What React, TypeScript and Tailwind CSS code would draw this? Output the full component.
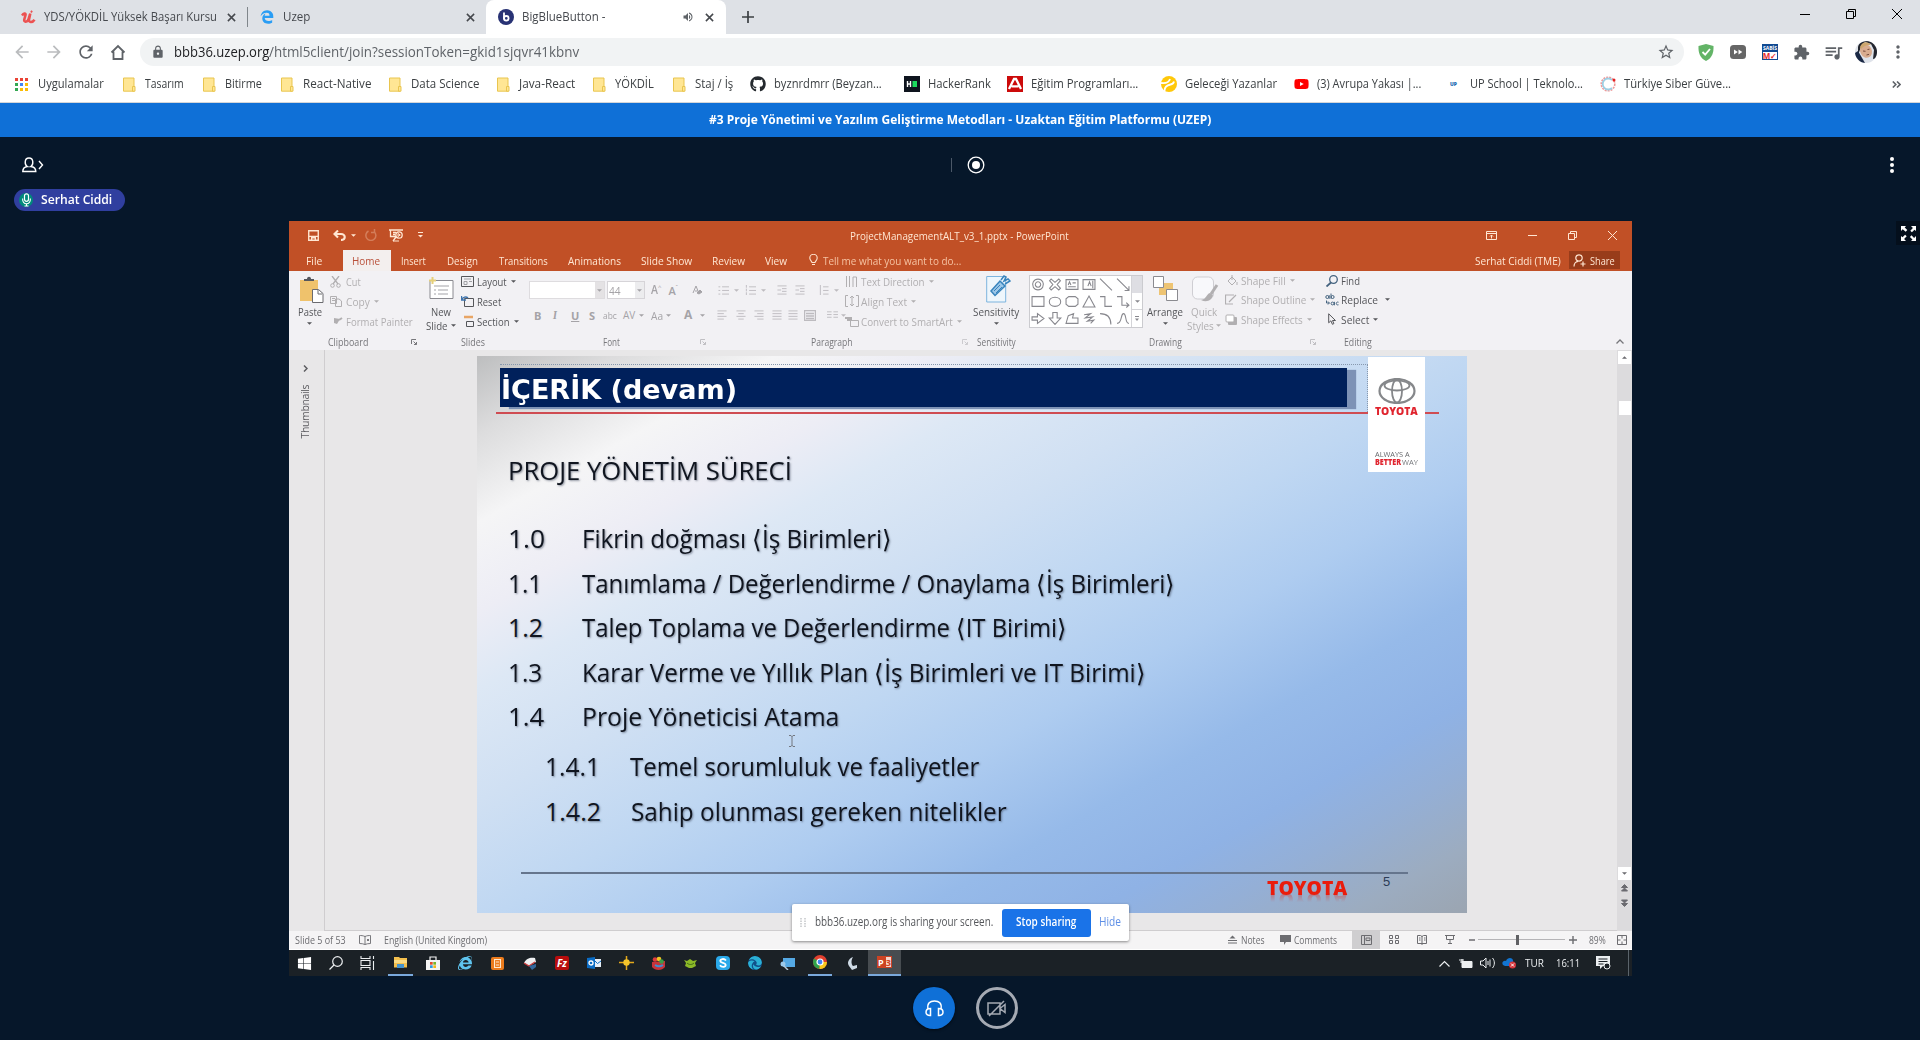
import React, { useLayoutEffect, useRef, useState } from "react";
import { FaGithub, FaYoutube, FaWindows, FaEdge, FaEdgeLegacy, FaInternetExplorer } from "react-icons/fa6";
import { MdLock, MdStarBorder, MdExtension, MdQueueMusic, MdMoreVert, MdRefresh, MdArrowBack, MdArrowForward, MdVolumeUp } from "react-icons/md";

type TProps = { w: number; className?: string; children: string };

/* A single line of text condensed or widened to an exact column width. */
function T({ w, className = "", children }: TProps) {
  const ref = useRef<HTMLSpanElement>(null);
  const [scale, setScale] = useState(1);
  useLayoutEffect(() => {
    if (ref.current) setScale(w / ref.current.offsetWidth);
  }, [w, children]);
  return (
    <span className={`inline-block shrink-0 whitespace-pre ${className}`} style={{ width: w }}>
      <span ref={ref} className="inline-block origin-left" style={{ transform: `scaleX(${scale})` }}>
        {children}
      </span>
    </span>
  );
}

const Svg = ({ s = "", vb = "0 0 16 16", children }: { s?: string; vb?: string; children: React.ReactNode }) => (
  <svg viewBox={vb} className={`shrink-0 ${s}`} fill="none" stroke="currentColor">
    {children}
  </svg>
);

const Close = ({ s = "w-[9px] h-[9px]" }: { s?: string }) => (
  <Svg s={s} vb="0 0 10 10">
    <path d="M1 1l8 8M9 1l-8 8" strokeWidth="1.7" />
  </Svg>
);

const Folder = () => (
  <Svg s="h-[15px] w-[13px]" vb="0 0 13 15">
    <path d="M.5 1h10.500v13.200H.5z" fill="#ffe694" stroke="#e9c54f" />
    <path d="M9.500 9.500h2.500v4.700H9.500z" fill="#ffe694" stroke="#e9c54f" />
  </Svg>
);

const Caret = ({ s = "" }: { s?: string }) => (
  <Svg s={`h-[3px] w-[5px] ${s}`} vb="0 0 6 3">
    <path d="M0 0h6L3 3z" fill="currentColor" stroke="none" />
  </Svg>
);

/* ---------- Browser ---------- */

function TabStrip() {
  return (
    <div className="flex h-[34px] items-center bg-[#dee1e6] text-[12px] leading-none text-[#45484d]">
      <div className="flex w-[247px] items-center pl-[21px]">
        <Svg s="h-[14px] w-[15px]" vb="0 0 15 14">
          <path d="M1 5.500c1.500-2 4-3 3.500-.5L3.300 9.500c-.6 2.700 2.700 3 4 .3L9 4.500M9.300 3.500 8 9.500c-.6 3 3.300 3.500 5.500.2" stroke="#ec5252" strokeWidth="2.600" />
          <path d="M10 2.500 11 .8" stroke="#ec5252" strokeWidth="1.800" />
        </Svg>
        <T w={173} className="ml-[8px]">YDS/YÖKDİL Yüksek Başarı Kursu</T>
        <Close s="ml-[10px] h-[9px] w-[9px]" />
      </div>
      <div className="h-[20px] w-px bg-[#80868b]" />
      <div className="flex w-[238px] items-center pl-[12px]">
        <FaEdgeLegacy className="h-[14px] w-[14px] text-[#2a9df4]" />
        <T w={27} className="ml-[9px]">Uzep</T>
        <Close s="ml-[156px] h-[9px] w-[9px]" />
      </div>
      <div className="flex h-full w-[240px] items-center rounded-t-[8px] bg-white pl-[12px]">
        <Svg s="h-[16px] w-[16px]">
          <circle cx="8" cy="8" r="8" fill="#283274" stroke="none" />
          <path d="M6 3.500v6.800" stroke="#fff" strokeWidth="1.800" />
          <circle cx="8.300" cy="9.300" r="2.300" stroke="#fff" strokeWidth="1.800" />
        </Svg>
        <T w={83} className="ml-[8px]">BigBlueButton -</T>
        <MdVolumeUp className="ml-[77px] h-[12px] w-[12px] text-[#5f6368]" />
        <Close s="ml-[11px] h-[9px] w-[9px]" />
      </div>
      <Svg s="ml-[16px] h-[12px] w-[12px] text-[#3c4043]" vb="0 0 12 12">
        <path d="M6 0v12M0 6h12" strokeWidth="1.700" />
      </Svg>
      <div className="mb-[6px] ml-auto flex items-center pr-[18px] text-black">
        <Svg s="h-[10px] w-[10px]" vb="0 0 10 10"><path d="M0 5.500h10" /></Svg>
        <Svg s="ml-[36px] h-[10px] w-[10px]" vb="0 0 10 10"><path d="M.5 2.500h7v7h-7zM2.500 2.500v-2h7v7h-2" /></Svg>
        <Svg s="ml-[36px] h-[10px] w-[10px]" vb="0 0 10 10"><path d="M0 0l10 10M10 0L0 10" /></Svg>
      </div>
    </div>
  );
}

function Toolbar() {
  return (
    <div className="flex h-[36px] items-center bg-white pl-[12px] text-[#5f6368]">
      <MdArrowBack className="h-[20px] w-[20px] text-[#babcbe]" />
      <MdArrowForward className="ml-[12px] h-[20px] w-[20px] text-[#babcbe]" />
      <MdRefresh className="ml-[12px] h-[20px] w-[20px]" />
      <Svg s="ml-[14px] h-[16px] w-[16px]"><path d="M1.500 8.500 8 2l6.500 6.500M3.500 7.500V15h9V7.500" strokeWidth="1.800" /></Svg>
      <div className="ml-[14px] flex h-[28px] w-[1544px] items-center rounded-full bg-[#f1f3f4] pl-[11px] text-[14px] leading-none">
        <MdLock className="h-[14px] w-[14px]" />
        <T w={95} className="ml-[9px] text-[#202124]">bbb36.uzep.org</T>
        <T w={310}>/html5client/join?sessionToken=gkid1sjqvr41kbnv</T>
        <MdStarBorder className="ml-auto mr-[9px] h-[18px] w-[18px]" />
      </div>
      <Svg s="ml-[14px] h-[17px] w-[16px]" vb="0 0 16 17">
        <path d="M8 0 15.500 2c.3 7-1.500 12-7.500 15C2 14 .2 9 .5 2z" fill="#63b467" stroke="none" />
        <path d="M4.500 8 7.200 10.700 12 5" stroke="#fff" strokeWidth="1.800" />
      </Svg>
      <Svg s="ml-[16px] h-[14px] w-[16px]" vb="0 0 16 14">
        <rect width="16" height="14" rx="3.500" fill="#666" stroke="none" />
        <path d="M4 4.500l3.800 2.500L4 9.500zM8.500 4.500l3.800 2.500-3.800 2.500z" fill="#fff" stroke="none" />
      </Svg>
      <div className="ml-[16px] flex h-[16px] w-[16px] flex-col items-center border border-[#114a92] bg-white leading-none">
        <span className="h-[7px] w-full bg-[#114a92] text-center text-[5px] font-bold leading-[7px] text-white">SABİS</span>
        <span className="text-[8px] font-bold leading-[7px] text-[#e52b2b]">M✓</span>
      </div>
      <MdExtension className="ml-[15px] h-[17px] w-[17px]" />
      <MdQueueMusic className="ml-[13px] h-[21px] w-[21px]" />
      <Svg s="ml-[11px] h-[22px] w-[22px] rounded-full" vb="0 0 22 22">
        <rect width="22" height="22" fill="#dfe3ea" stroke="none" />
        <path d="M3 6c1-5 6-6 11-6l8 3v14l-4 1 1-9-3-6-6-2-4 5-3 8z" fill="#23262f" stroke="none" />
        <path d="M0 12l3-2 7 12H0z" fill="#1b2945" stroke="none" />
        <ellipse cx="11" cy="10" rx="5.800" ry="7" transform="rotate(-25 11 10)" fill="#d9ac8f" stroke="none" />
        <path d="M5 6c2-6 8-6 11-2-4-.5-7 1-10 4z" fill="#cda76f" stroke="none" />
        <path d="M8 10l2.500.3M12.500 8.500l2-.3M11.500 14l2.500-.6" stroke="#744a3b" />
      </Svg>
      <MdMoreVert className="ml-[11px] h-[20px] w-[20px]" />
    </div>
  );
}

function Bookmarks() {
  const folders: [string, number, string][] = [
    ["Tasarım", 39, "w-[80px]"],
    ["Bitirme", 37, "w-[78px]"],
    ["React-Native", 68, "w-[108px]"],
    ["Data Science", 68, "w-[108px]"],
    ["Java-React", 56, "w-[96px]"],
    ["YÖKDİL", 39, "w-[80px]"],
    ["Staj / İş", 38, "w-[77px]"],
  ];
  const dots = ["#ea4335", "#ea4335", "#ea4335", "#34a853", "#4285f4", "#fbbc04", "#34a853", "#fbbc04", "#fbbc04"];
  return (
    <div className="flex h-[33px] items-center border-b border-[#d4d6d9] bg-white pb-[4px] pl-[15px] text-[12px] leading-none text-[#3c4043]">
      <Svg s="h-[13px] w-[13px]" vb="0 0 13 13">
        {dots.map((c, i) => (
          <rect key={i} x={(i % 3) * 5} y={Math.floor(i / 3) * 5} width="3" height="3" fill={c} stroke="none" />
        ))}
      </Svg>
      <T w={66} className="ml-[10px] mr-[19px]">Uygulamalar</T>
      {folders.map(([name, w, cell]) => (
        <div key={name} className={`flex shrink-0 items-center gap-[9px] ${cell}`}>
          <Folder />
          <T w={w}>{name}</T>
        </div>
      ))}
      <div className="flex w-[154px] shrink-0 items-center gap-[8px]">
        <FaGithub className="h-[16px] w-[16px] text-[#24292e]" />
        <T w={108}>byznrdmrr (Beyzan...</T>
      </div>
      <div className="flex w-[103px] shrink-0 items-center gap-[8px]">
        <Svg s="h-[16px] w-[16px]">
          <rect width="16" height="16" fill="#0e141e" stroke="none" />
          <path d="M3.500 5v6M6.500 5v6M3.500 8h3" stroke="#fff" strokeWidth="1.400" />
          <rect x="8.500" y="5" width="4.500" height="6" fill="#1bdb5e" stroke="none" />
        </Svg>
        <T w={63}>HackerRank</T>
      </div>
      <div className="flex w-[154px] shrink-0 items-center gap-[8px]">
        <Svg s="h-[16px] w-[16px]">
          <rect width="16" height="16" fill="#cc0a0a" stroke="none" />
          <path d="M2 13 7 3h2l5 10M4.500 10.300h7" stroke="#fff" strokeWidth="2.300" />
        </Svg>
        <T w={107}>Eğitim Programları...</T>
      </div>
      <div className="flex w-[133px] shrink-0 items-center gap-[8px]">
        <Svg s="h-[16px] w-[16px]">
          <circle cx="8" cy="8" r="8" fill="#ffc80a" stroke="none" />
          <path d="M0 7c4 .5 8-.5 9-4M3.500 15c0-5 3-6 6-6.500 2-.3 3-1 3.500-3" stroke="#fff" strokeWidth="1.800" />
        </Svg>
        <T w={92}>Geleceği Yazanlar</T>
      </div>
      <div className="flex w-[156px] shrink-0 items-center gap-[8px]">
        <FaYoutube className="h-[16px] w-[15px] text-[#f00]" />
        <T w={104}>(3) Avrupa Yakası |...</T>
      </div>
      <div className="flex w-[150px] shrink-0 items-center gap-[12px]">
        <span className="w-[8px] text-[5px] font-black text-[#1767b0]">UP</span>
        <T w={113}>UP School | Teknolo...</T>
      </div>
      <div className="flex shrink-0 items-center gap-[8px]">
        <Svg s="h-[16px] w-[16px]">
          <circle cx="8" cy="8" r="6.800" stroke="#ef9a9a" strokeWidth="1.600" strokeDasharray="2 1" />
          <path d="M12 4a5.500 5.500 0 1 0 0 8" stroke="#9ccfe4" strokeWidth="1.800" />
          <circle cx="14" cy="4" r="1.500" fill="#e52020" stroke="none" />
        </Svg>
        <T w={107}>Türkiye Siber Güve...</T>
      </div>
      <Svg s="ml-auto mr-[19px] h-[7px] w-[9px] text-[#5f6368]" vb="0 0 9 7">
        <path d="M.8.5l3 3-3 3M5 .5l3 3-3 3" strokeWidth="1.600" />
      </Svg>
    </div>
  );
}

/* ---------- PowerPoint window ---------- */

const tabs: [string, number, string][] = [
  ["Insert", 25, "w-[46px]"],
  ["Design", 31, "w-[52px]"],
  ["Transitions", 49, "w-[69px]"],
  ["Animations", 53, "w-[73px]"],
  ["Slide Show", 51, "w-[71px]"],
  ["Review", 33, "w-[53px]"],
  ["View", 22, "w-[44px]"],
];

function PptHeader() {
  return (
    <div className="h-[50px] bg-[#c15026] text-[#ffe6d2]">
      <div className="flex h-[28px] items-center pl-[19px]">
        <Svg s="h-[11px] w-[11px]" vb="0 0 12 12"><path d="M.8.800h10.400v10.400H.8zM1 7h10M4 11V8.500h4V11" strokeWidth="1.500" /></Svg>
        <Svg s="ml-[14px] h-[11px] w-[13px]" vb="0 0 13 11"><path d="M5 .5 1.500 4 5 7.500M1.500 4H8c5 0 5 6 0 6" strokeWidth="2.100" /></Svg>
        <Caret s="ml-[5px]" />
        <Svg s="ml-[9px] h-[12px] w-[12px] opacity-30" vb="0 0 12 12"><path d="M9 2.500A5 5 0 1 1 3.500 2M9.500 0v3.500H6" strokeWidth="1.500" /></Svg>
        <Svg s="ml-[12px] h-[13px] w-[14px]" vb="0 0 14 13"><path d="M0 1h14M1.500 1v6.500H7M4 3.500h3M4 5.500h2M4 12l3-4" strokeWidth="1.300" /><circle cx="10" cy="6" r="3.200" strokeWidth="1.300" /><path d="M9 4.500v3l2.300-1.500zM4 12h6" /></Svg>
        <Svg s="ml-[15px] h-[6px] w-[5px]" vb="0 0 5 6"><path d="M0 .5h5" /><path d="M0 3h5L2.500 5.500z" fill="currentColor" stroke="none" /></Svg>
        <T w={219} className="ml-[427px] mt-px text-[11px] font-medium leading-none">ProjectManagementALT_v3_1.pptx - PowerPoint</T>
        <Svg s="ml-[417px] h-[9px] w-[11px]" vb="0 0 11 9"><path d="M.5.500h10v8H.5zM.5 2.500h10M5.500 7.500V4M4 5.500 5.500 4 7 5.500" /></Svg>
        <Svg s="ml-[31px] h-[9px] w-[9px]" vb="0 0 9 9"><path d="M0 4.500h9" /></Svg>
        <Svg s="ml-[31px] h-[9px] w-[9px]" vb="0 0 9 9"><path d="M.5 2.500h6v6h-6zM2.500 2.500v-2h6v6h-2" /></Svg>
        <Svg s="ml-[31px] h-[9px] w-[9px]" vb="0 0 9 9"><path d="M0 0l9 9M9 0L0 9" /></Svg>
      </div>
      <div className="flex h-[22px] items-center text-[11px] font-medium leading-none">
        <T w={16} className="ml-[17px]">File</T>
        <div className="ml-[21px] mr-[10px] mt-px flex h-[21px] w-[48px] items-center bg-[#f3efee] pb-px pl-[9px] text-[#b9503a]">
          <T w={28}>Home</T>
        </div>
        {tabs.map(([name, w, cell]) => (
          <span key={name} className={`flex shrink-0 ${cell}`}><T w={w}>{name}</T></span>
        ))}
        <Svg s="h-[12px] w-[9px]" vb="0 0 9 12"><path d="M3 8.500C2.500 7 .8 6 .8 4a3.700 3.700 0 0 1 7.400 0c0 2-1.700 3-2.200 4.500zM3 10.500h3" strokeWidth="1.100" /></Svg>
        <T w={138} className="ml-[5px] text-[#f6c3a3]">Tell me what you want to do...</T>
        <T w={86} className="ml-[514px]">Serhat Ciddi (TME)</T>
        <div className="ml-[8px] flex h-[18px] w-[51px] items-center bg-[#983c1a] pl-[4px]">
          <Svg s="h-[13px] w-[13px]" vb="0 0 13 13"><circle cx="6" cy="4" r="3.200" strokeWidth="1.200" /><path d="M1 12.500c0-3 2-5 4-5.200M10 7.500v5M7.500 10h5" strokeWidth="1.200" /></Svg>
          <T w={25} className="ml-[4px]">Share</T>
        </div>
      </div>
    </div>
  );
}

const Lines = ({ d = "M0 1h10M0 4h10M0 7h10M0 10h10", s = "" }: { d?: string; s?: string }) => (
  <Svg s={`h-[10px] w-[10px] ${s}`} vb="0 0 10 11"><path d={d} /></Svg>
);

function RibbonRow({ icon, label, w, caret, faded }: { icon: React.ReactNode; label: string; w: number; caret?: boolean; faded?: boolean }) {
  return (
    <div className={`flex items-center ${faded ? "text-[#b1afb1]" : "text-[#55565a]"}`}>
      <span className="flex w-[16px] shrink-0 items-center">{icon}</span>
      <T w={w}>{label}</T>
      {caret && <Caret s="ml-[4px]" />}
    </div>
  );
}

const Launcher = ({ s = "" }: { s?: string }) => (
  <Svg s={`h-[6px] w-[6px] ${s}`} vb="0 0 6 6"><path d="M.5 5V.5H5M2.500 2.500l3 3M5.500 3v2.500H3" /></Svg>
);

const groupLabel = "flex h-[13px] items-center text-[10px] leading-none text-[#77777b]";

function Shapes() {
  const d = [
    "M5.500 .5a5 5 0 1 0 .01 0M5.500 3a2.500 2.500 0 1 0 .01 0", "M2 .5l3.500 3 3.500-3 1.500 1.500-3 3.500 3 3.500-1.500 1.500-3.500-3-3.500 3L.5 9l3-3.500L.5 2z", "M0 1h11v9H0zM2 7.500h7M6 4h3M2 6l1.200-3L4.500 6", "M0 1h11v9H0zM9 9V2M4.500 7 6 3l1.500 4", "M0 0l11 11", "M0 0l11 11M11 7v4H7",
    "M0 1h11v9H0z", "M5.500 1.500c7 0 7 8.500 0 8.500s-7-8.500 0-8.500", "M2.500 1h6l2.500 2v5L8.500 10h-6L0 8V3z", "M5.500.5 11 10.500H0z", "M0 1h4.500v9H11", "M0 1h4.500v8H11M8.500 6.500 11 9l-2.500 2",
    "M0 4h5V1l6 4.500L5 10V7H0z", "M3.500 0h4v5H11l-5.500 6L0 5h3.500z", "M2 3l5-2-1 4h5v5H0z", "M1 2l6-1-5 4 7-1-5 4 6-1-3 3", "M0 1c7 0 10 3 10 10", "M0 10C5 10 3 1 6 1s1 9 5 9",
  ];
  return (
    <div className="ml-[4px] mt-[4px] flex h-[53px] w-[114px] border border-[#cbcbcf] bg-white text-[#88888e]">
      <div className="grid flex-1 grid-cols-6 grid-rows-3 place-items-center">
        {d.map((p, i) => (
          <Svg key={i} s="h-[13px] w-[14px]" vb="-.5 -.5 12 12"><path d={p} /></Svg>
        ))}
      </div>
      <div className="flex w-[11px] flex-col items-center border-l border-[#d4d4d8]">
        <span className="h-[17px] w-full bg-[#dedee3]" />
        <span className="flex h-[17px] w-full items-center justify-center border-b border-[#d4d4d8]"><Caret s="w-[4px]" /></span>
        <span className="flex h-[17px] items-center"><Svg s="h-[5px] w-[4px]" vb="0 0 4 5"><path d="M0 .5h4" /><path d="M0 2.500h4L2 5z" fill="currentColor" stroke="none" /></Svg></span>
      </div>
    </div>
  );
}

function Ribbon() {
  return (
    <div className="flex h-[79px] shrink-0 bg-[#f2f1f4] text-[11px] font-medium leading-none text-[#55565a]">
      {/* Clipboard */}
      <div className="w-[137px]">
        <div className="flex h-[64px]">
          <div className="flex w-[41px] flex-col items-center pt-[5px]">
            <Svg s="ml-[4px] h-[27px] w-[25px]" vb="0 0 25 27">
              <path d="M1 4h18v21H1z" fill="#efc26c" stroke="none" />
              <path d="M5 5V3h3c0-3 4-3 4 0h3v2z" fill="#55575e" stroke="none" />
              <path d="M13.500 13.500h6l4.500 4v9H13.500z" fill="#fff" stroke="#6b6b6f" /><path d="M19 14v4h4" stroke="#6b6b6f" />
            </Svg>
            <T w={24} className="mt-[3px]">Paste</T>
            <Caret s="mt-[5px] w-[4px]" />
          </div>
          <div className="mt-[1px] grid h-[59px] grid-rows-3">
            <RibbonRow faded label="Cut" w={15} icon={<Svg s="h-[12px] w-[11px]" vb="0 0 11 12"><path d="M2 0l6 8M9 0L3 8" strokeWidth="1.300" /><circle cx="2.500" cy="9.500" r="1.800" /><circle cx="8.500" cy="9.500" r="1.800" /></Svg>} />
            <RibbonRow faded label="Copy" w={24} caret icon={<Svg s="h-[11px] w-[12px]" vb="0 0 12 11"><path d="M.5.500h6v7h-6zM5.500 3h3.500l2.500 2v5.500h-6zM2 2.500h3M2 4.500h3" /></Svg>} />
            <RibbonRow faded label="Format Painter" w={67} icon={<Svg s="ml-[3px] h-[9px] w-[10px]" vb="0 0 10 9"><path d="M1 1l6 1-3 5-3-1z" fill="currentColor" stroke="none" /><path d="M6 3l3-2" strokeWidth="2" /></Svg>} />
          </div>
        </div>
        <div className={groupLabel}><T w={40} className="ml-[39px]">Clipboard</T><Launcher s="ml-[43px]" /></div>
      </div>
      {/* Slides */}
      <div className="w-[100px]">
        <div className="flex h-[64px]">
          <div className="flex w-[35px] flex-col pt-[6px]">
            <Svg s="ml-[3px] h-[22px] w-[25px]" vb="0 0 25 22">
              <path d="M1 3.500h23v18H1z" fill="#fff" stroke="#8a8a90" /><path d="M5 9h15M5 13h2M9 13h10M5 17h2M9 17h10" stroke="#a3a3a8" />
              <path d="M3.500 0v7M0 3.500h7" stroke="#e5cf7a" strokeWidth="2" />
            </Svg>
            <T w={20} className="ml-[5px] mt-[7px]">New</T>
            <span className="mt-[3px] flex items-center"><T w={22}>Slide</T><Caret s="ml-[3px] w-[4px]" /></span>
          </div>
          <div className="mt-[1px] grid h-[59px] grid-rows-3">
            <RibbonRow label="Layout" w={30} caret icon={<Svg s="h-[11px] w-[13px]" vb="0 0 13 11"><path d="M.5.500h12v10H.5z" /><path d="M3 3h7M3 5.500h3v3H3zM8 5.500h3" stroke="#a0a0a4" /></Svg>} />
            <RibbonRow label="Reset" w={24} icon={<Svg s="h-[11px] w-[13px]" vb="0 0 13 11"><path d="M3.500 2.500h9v8h-9z" /><path d="M.5 0v4H5M.8 3.500C2 1 5 0 7 2" stroke="#3f74ad" strokeWidth="1.400" /></Svg>} />
            <RibbonRow label="Section" w={33} caret icon={<Svg s="ml-[3px] h-[12px] w-[10px]" vb="0 0 10 12"><path d="M2.500 6.500h7v5h-7z" /><path d="M0 2h9" stroke="#e8a565" strokeWidth="2.500" /></Svg>} />
          </div>
        </div>
        <div className={groupLabel}><T w={24} className="ml-[35px]">Slides</T></div>
      </div>
      {/* Font */}
      <div className="w-[191px] text-[#a5a3a7]">
        <div className="h-[64px] pt-[10px]">
          <div className="flex h-[18px] items-center pl-[3px]">
            <div className="flex h-full w-[76px] justify-end border border-[#dedcdf] bg-white"><span className="flex w-[9px] items-center justify-center bg-[#e4e2e4]"><Caret s="w-[4px]" /></span></div>
            <div className="ml-[2px] flex h-full w-[38px] items-center justify-between border border-[#d6d4d8] bg-white"><T w={12} className="ml-px">44</T><span className="flex h-full w-[9px] items-center justify-center bg-[#ececee]"><Caret s="w-[4px]" /></span></div>
            <T w={7} className="ml-[6px] text-[12px] font-semibold">A</T><span className="-mt-[7px] text-[6px]">^</span>
            <T w={7} className="ml-[7px] text-[11px] font-semibold">A</T><span className="-mt-[7px] text-[6px]">ˇ</span>
            <Svg s="ml-[14px] h-[10px] w-[10px]" vb="0 0 10 10"><path d="M1 8l3-7 2 5M3 6h3" /><path d="M5 8l3-3 2 2-3 2z" fill="currentColor" /></Svg>
          </div>
          <div className="mt-[7px] flex h-[18px] items-center pl-[8px]">
            <span className="w-[19px] font-bold">B</span>
            <span className="w-[18px] font-serif font-bold italic">I</span>
            <span className="w-[18px] font-bold underline">U</span>
            <span className="w-[14px] font-bold">S</span>
            <T w={14} className="text-[9px] line-through">abc</T>
            <T w={12} className="ml-[6px] text-[10px] underline">AV</T><Caret s="ml-[4px] w-[4px]" />
            <T w={12} className="ml-[7px]">Aa</T><Caret s="ml-[3px] w-[4px]" />
            <span className="ml-[13px] text-[12px] font-bold">A</span><Caret s="ml-[8px] w-[4px]" />
          </div>
        </div>
        <div className={groupLabel}><T w={17} className="ml-[77px]">Font</T><Launcher s="ml-[80px] opacity-40" /></div>
      </div>
      {/* Paragraph */}
      <div className="w-[252px] text-[#bdbbbf]">
        <div className="flex h-[64px]">
          <div className="w-[128px] shrink-0 pt-[10px]">
            <div className="flex h-[18px] items-center">
              <Lines s="w-[12px]" d="M0 2h2M4 2h8M0 6h2M4 6h8M0 10h2M4 10h8" /><Caret s="ml-[5px] w-[4px]" />
              <Lines s="ml-[5px] w-[12px]" d="M1 0v3M4 2h8M1 4v3M4 6h8M1 8v3M4 10h8" /><Caret s="ml-[5px] w-[4px]" />
              <Lines s="ml-[10px] w-[12px]" d="M0 1h10M5 4h5M5 7h5M0 10h10M0 5.500h4" />
              <Lines s="ml-[6px] w-[12px]" d="M0 1h10M5 4h5M5 7h5M0 10h10M0 5.500h4" />
              <Lines s="ml-[12px] w-[12px]" d="M1 0v11M4 2h6M4 6h6M4 10h6" /><Caret s="ml-[4px] w-[4px]" />
            </div>
            <div className="mt-[7px] flex h-[18px] items-center">
              <Lines d="M0 1h10M0 4h7M0 7h10M0 10h7" />
              <Lines s="ml-[9px]" d="M0 1h10M2 4h6M0 7h10M2 10h6" />
              <Lines s="ml-[8px]" d="M0 1h10M3 4h7M0 7h10M3 10h7" />
              <Lines s="ml-[8px]" />
              <Lines s="ml-[6px]" />
              <Svg s="ml-[6px] h-[11px] w-[12px]" vb="0 0 12 11"><path d="M.5.500h11v10H.5zM2 3.500h8M2 6h8M2 8.500h8" strokeWidth="1.400" /></Svg>
              <Lines s="ml-[10px] w-[13px]" d="M-1 2h5M6 2h5M-1 5h5M6 5h5M-1 8h5M6 8h5" />
              <Caret s="ml-[2px] w-[4px]" />
            </div>
          </div>
          <div className="mt-[1px] grid h-[59px] grid-rows-3">
            <RibbonRow faded label="Text Direction" w={64} caret icon={<Svg s="h-[12px] w-[13px]" vb="0 0 13 12"><path d="M1.500 0v11M4.500 0v11M8 11V1h3.500v10" /></Svg>} />
            <RibbonRow faded label="Align Text" w={46} caret icon={<Svg s="h-[12px] w-[14px]" vb="0 0 14 12"><path d="M3 .5H.5v11H3M11 .5h2.500v11H11M7 1v10M5 3l2-2 2 2M5 9l2 2 2-2" /></Svg>} />
            <RibbonRow faded label="Convert to SmartArt" w={92} caret icon={<Svg s="h-[11px] w-[14px]" vb="0 0 14 11"><path d="M0 2h7M2 4h5" strokeWidth="2" /><path d="M5.500 4.500h8v6h-8z" /></Svg>} />
          </div>
        </div>
        <div className={groupLabel}><T w={42} className="ml-[94px]">Paragraph</T><Launcher s="ml-[109px] opacity-30" /></div>
      </div>
      {/* Sensitivity */}
      <div className="w-[56px]">
        <div className="flex h-[64px] flex-col pt-[4px]">
          <Svg s="ml-[17px] h-[28px] w-[25px]" vb="0 0 25 28">
            <path d="M.7 1.500h19v25.500H.7z" fill="#eef6fc" stroke="#7db4de" />
            <path d="M5 16 14 6l5 5-10 9.500z" fill="#9cc7e8" stroke="#3884bd" strokeWidth="1.500" /><path d="M8 16l6-6M10 18l6-6" stroke="#3884bd" />
            <path d="M15 5l3-4 2 1-2 4 4-2 2 2-5 3" stroke="#3884bd" strokeWidth="1.500" />
          </Svg>
          <T w={46} className="ml-[4px] mt-[3px]">Sensitivity</T>
          <Caret s="ml-[25px] mt-[5px] w-[4px]" />
        </div>
        <div className={groupLabel}><T w={39} className="ml-[8px]">Sensitivity</T></div>
      </div>
      {/* Drawing */}
      <div className="w-[295px]">
        <div className="flex h-[64px]">
          <Shapes />
          <div className="ml-[4px] flex w-[40px] flex-col pt-[5px]">
            <Svg s="ml-[6px] h-[25px] w-[25px]" vb="0 0 25 25">
              <path d="M6 7h14v12H6z" fill="#eec473" stroke="none" />
              <path d="M.5.500h10v11H.5zM13.500 13.500h11v11h-11z" fill="#fff" stroke="#8b8b90" />
            </Svg>
            <T w={36} className="mt-[5px]">Arrange</T>
            <Caret s="ml-[16px] mt-[5px] w-[4px]" />
          </div>
          <div className="flex w-[39px] flex-col pt-[5px] text-[#b1afb1]">
            <Svg s="ml-[5px] h-[27px] w-[27px]" vb="0 0 27 27">
              <rect x=".5" y="1" width="21" height="22" rx="5" fill="#f8f8fb" stroke="#cfced3" />
              <path d="M25 9l-6 9" strokeWidth="3" /><path d="M18 17c-4 1-3 6-9 7 6 3 11 0 12-5z" fill="currentColor" stroke="none" />
            </Svg>
            <T w={26} className="ml-[4px] mt-[3px]">Quick</T>
            <span className="mt-[3px] flex items-center"><T w={27}>Styles</T><Caret s="ml-[2px] w-[4px]" /></span>
          </div>
          <div className="-ml-px grid h-[58px] grid-rows-3">
            <RibbonRow faded label="Shape Fill" w={45} caret icon={<Svg s="ml-[2px] h-[11px] w-[11px]" vb="0 0 11 11"><path d="M1 6l4-4 4 4-4 4zM5 0v5M10 7v3" /></Svg>} />
            <RibbonRow faded label="Shape Outline" w={65} caret icon={<Svg s="h-[11px] w-[12px]" vb="0 0 12 11"><path d="M9 1H.5v9H8M4 8l7-7" strokeWidth="1.200" /></Svg>} />
            <RibbonRow faded label="Shape Effects" w={62} caret icon={<Svg s="h-[11px] w-[12px]" vb="0 0 12 11"><rect x="3" y="3" width="9" height="8" rx="1" fill="currentColor" stroke="none" /><rect x="1" y="1" width="8" height="7" rx="1" fill="#fff" /></Svg>} />
          </div>
        </div>
        <div className={groupLabel}><T w={33} className="ml-[124px]">Drawing</T><Launcher s="ml-[128px] opacity-40" /></div>
      </div>
      {/* Editing */}
      <div className="w-[312px]">
        <div className="flex h-[64px] pl-[5px]">
          <div className="grid h-[58px] grid-rows-3">
            <RibbonRow label="Find" w={19} icon={<Svg s="ml-px h-[12px] w-[12px]" vb="0 0 12 12"><circle cx="7.500" cy="4.500" r="3.800" stroke="#44637f" strokeWidth="1.300" /><path d="M5 7.500.5 11.500" stroke="#44637f" strokeWidth="1.800" /></Svg>} />
            <div className="flex items-center">
              <Svg s="mr-[2px] h-[13px] w-[14px] text-[#44637f]" vb="0 0 14 13">
                <circle cx="2.300" cy="4" r="1.500" /><path d="M4.200 2.200v3.600M6 .5v5.300" /><circle cx="7.600" cy="4" r="1.500" />
                <path d="M1.500 7.500v2.500h2.500M3 8.500 4.500 10 3 11.500" /><circle cx="7.500" cy="10.500" r="1.400" /><path d="M9.400 8.800v3.500M13.500 9.200c-3-1-3 3.500 0 2.600" />
              </Svg>
              <T w={37}>Replace</T><Caret s="ml-[7px] w-[4px]" />
            </div>
            <RibbonRow label="Select" w={28} caret icon={<Svg s="ml-[3px] h-[12px] w-[8px]" vb="0 0 8 12"><path d="M.7.800v9l2.200-2 1.500 3.500 1.500-.7L4.500 7.500h3z" /></Svg>} />
          </div>
        </div>
        <div className={groupLabel}>
          <T w={28} className="ml-[24px]">Editing</T>
          <Svg s="ml-[244px] h-[5px] w-[8px]" vb="0 0 8 5"><path d="M.5 4.500 4 1l3.500 3.500" strokeWidth="1.300" /></Svg>
        </div>
      </div>
    </div>
  );
}

const ToyotaEmblem = () => (
  <Svg s="h-[26px] w-[38px] text-[#85878a]" vb="0 0 38 26">
    <ellipse cx="19" cy="13" rx="17.500" ry="12" strokeWidth="2.200" />
    <ellipse cx="19" cy="7.500" rx="12.500" ry="5" strokeWidth="1.800" />
    <ellipse cx="19" cy="13" rx="5" ry="11.500" strokeWidth="1.800" />
  </Svg>
);

/* number, number width, text, text width */
const outline: [string, number, string, number][] = [
  ["1.0", 37, "Fikrin doğması ⟨İş Birimleri⟩", 310],
  ["1.1", 34, "Tanımlama / Değerlendirme / Onaylama ⟨İş Birimleri⟩", 593],
  ["1.2", 35, "Talep Toplama ve Değerlendirme ⟨IT Birimi⟩", 485],
  ["1.3", 34, "Karar Verme ve Yıllık Plan ⟨İş Birimleri ve IT Birimi⟩", 563],
  ["1.4", 36, "Proje Yöneticisi Atama", 257],
];

function Slide() {
  return (
    <div className="relative h-[557px] w-[990px] bg-[linear-gradient(to_bottom_right,#bdbebf_0%,#dcdcdd_7%,#f5f5f6_15%,#ededf5_23%,#dde8f5_30%,#d0e0f3_40%,#bfd7f2_51%,#aeccf0_61%,#96bae9_72%,#8fb2e5_81%,#94afd6_87%,#9cacc0_94%,#9ba5b1_100%)]">
      <div className="flex h-[56px] pt-[8px] pl-[23px]">
        <div className="h-[48px] w-[868px] border-r border-t border-dotted border-[#8798ae] pt-[3px]">
          <div className="flex h-[39px] w-[847px] items-center bg-[#00205b] shadow-[9px_2px_1px_0px_#7d92b6]">
            <T w={236} className="ml-px mt-[4px] font-['DejaVu_Sans'] text-[26px] font-bold leading-none text-white">İÇERİK (devam)</T>
          </div>
        </div>
      </div>
      <div className="ml-[19px] h-[2px] w-[943px] bg-[#cf4c52]" />
      <div className="absolute left-[891px] top-[1px] flex h-[115px] w-[57px] flex-col items-center bg-white pt-[21px] leading-none">
        <ToyotaEmblem />
        <T w={43} className="mt-px text-[11px] font-extrabold text-[#e0242e]">TOYOTA</T>
        <T w={35} className="-ml-[8px] mt-[34px] text-[8px] text-[#66686c]">ALWAYS A</T>
        <span className="flex text-[8px]">
          <T w={26} className="font-extrabold text-[#e0242e]">BETTER</T>
          <T w={16} className="ml-px text-[#77797d]">WAY</T>
        </span>
      </div>
      <div className="flex flex-col pl-[31px] text-[25px] font-medium leading-[44.4px] text-[#10151f] [text-shadow:1px_1px_2px_rgba(60,70,90,0.55)]">
        <T w={284} className="mt-[34px]">PROJE YÖNETİM SÜRECİ</T>
        <div className="mt-[24px]">
          {outline.map(([n, nw, text, w]) => (
            <div key={n} className="flex h-[44.4px]">
              <span className="w-[74px]"><T w={nw}>{n}</T></span>
              <T w={w}>{text}</T>
            </div>
          ))}
        </div>
        <div className="mt-[6px] flex h-[44.4px] pl-[37px]"><span className="w-[85px]"><T w={55}>1.4.1</T></span><T w={349}>Temel sorumluluk ve faaliyetler</T></div>
        <div className="flex h-[44.4px] pl-[37px]"><span className="w-[86px]"><T w={56}>1.4.2</T></span><T w={376}>Sahip olunması gereken nitelikler</T></div>
      </div>
      <div className="ml-[44px] mt-[39px] h-[2px] w-[887px] bg-[#65758d]" />
      <div className="flex items-start pl-[790px] leading-none">
        <T w={80} className="mt-[4px] text-[20px] font-extrabold text-[#ea1c0c] [-webkit-box-reflect:below_-8px_linear-gradient(transparent_40%,rgba(0,0,0,0.55))]">TOYOTA</T>
        <span className="ml-[36px] mt-px font-['Liberation_Sans'] text-[13px] text-[#2c3b55]">5</span>
      </div>
      <Svg s="absolute left-[311px] top-[379px] h-[12px] w-[8px] text-[#73777f]" vb="0 0 8 12"><path d="M1 .5h2l1 1 1-1h2M1 11.500h2l1-1 1 1h2M4 1v10" /></Svg>
    </div>
  );
}

function Workspace() {
  return (
    <div className="flex h-[581px] bg-[#e8e7e8]">
      <div className="flex w-[36px] flex-col items-center border-r border-[#cfcdcf] pt-[15px] text-[#5d5d61]">
        <Svg s="-ml-[3px] h-[7px] w-[5px]" vb="0 0 5 7"><path d="M1 .5 4 3.500 1 6.500" strokeWidth="1.500" /></Svg>
        <span className="-ml-[3px] mt-[13px] rotate-180 text-[10.5px] font-medium leading-none tracking-[-0.4px] [writing-mode:vertical-rl]">Thumbnails</span>
      </div>
      <div className="flex-1 border-b border-[#cfcdcf] pl-[152px] pt-[6px]"><Slide /></div>
      <div className="flex w-[15px] flex-col items-center bg-[#dcdbdd] pt-[1px] text-[#6b6b70]">
        <span className="flex h-[13px] w-[13px] items-center justify-center bg-white"><Caret s="rotate-180" /></span>
        <span className="mt-[37px] h-[14px] w-[12px] bg-white" />
        <span className="mt-[452px] flex h-[13px] w-[13px] items-center justify-center bg-white"><Caret /></span>
        <Svg s="mt-[4px] h-[8px] w-[7px]" vb="0 0 7 8"><path d="M.5 3.500l3-3 3 3zM.5 7l3-3 3 3z" fill="currentColor" /></Svg>
        <Svg s="mt-[7px] h-[8px] w-[7px]" vb="0 0 7 8"><path d="M.5 1l3 3 3-3zM.5 4.500l3 3 3-3z" fill="currentColor" /></Svg>
      </div>
    </div>
  );
}

function StatusBar() {
  return (
    <div className="flex h-[18px] items-center bg-[#f5f4f5] pb-px text-[10px] font-medium leading-none text-[#6c6c70]">
      <T w={51} className="ml-[6px]">Slide 5 of 53</T>
      <Svg s="ml-[13px] h-[10px] w-[12px]" vb="0 0 12 10"><path d="M6 1v8.500M6 1.500C4 .5 2 .5.500.500v8c2 0 4 .3 5.500 1M6 1.500C8 .5 10 .5 11.500.500v8c-2 0-4 .3-5.500 1M8 4l2 2M10 4l-2 2" strokeWidth=".9" /></Svg>
      <T w={103} className="ml-[13px]">English (United Kingdom)</T>
      <Svg s="ml-[741px] h-[9px] w-[9px]" vb="0 0 9 9"><path d="M0 5.500h9M0 8h9" /><path d="M1.500 3.500h6L4.500.5z" fill="currentColor" stroke="none" /></Svg>
      <T w={24} className="ml-[4px]">Notes</T>
      <Svg s="ml-[15px] h-[10px] w-[11px]" vb="0 0 11 10"><path d="M0 0h11v7H6l-2 3V7H0z" fill="currentColor" stroke="none" /></Svg>
      <T w={43} className="ml-[3px]">Comments</T>
      <div className="-mb-px ml-[15px] flex h-[18px] w-[28px] items-center justify-center bg-[#cfced0]"><Svg s="h-[10px] w-[11px]" vb="0 0 11 10"><path d="M.5.500h10v9H.5zM3.500.500v9M5 3h4v2.500H5z" /></Svg></div>
      <Svg s="ml-[9px] h-[9px] w-[10px]" vb="0 0 10 9"><path d="M.5.500h3v3h-3zM6.500.500h3v3h-3zM.5 5.500h3v3h-3zM6.500 5.500h3v3h-3z" /></Svg>
      <Svg s="ml-[18px] h-[10px] w-[10px]" vb="0 0 10 10"><path d="M5 1v9M.5.500h3L5 1.500 6.500.500h3v8h-9zM2 3h1.500M2 5h1.500M7 3h1.500M7 5h1.500" /></Svg>
      <Svg s="ml-[18px] h-[9px] w-[10px]" vb="0 0 10 9"><path d="M0 .5h10M1.500.500v4h7v-4M5 5v3.500M3 8.500h4" /></Svg>
      <Svg s="ml-[14px] h-[6px] w-[6px]" vb="0 0 6 6"><path d="M0 3h6" strokeWidth="1.500" /></Svg>
      <div className="ml-[3px] flex h-[10px] w-[87px] items-center"><span className="h-px w-[38px] bg-[#b5b4b7]" /><span className="h-[10px] w-[3px] bg-[#606064]" /><span className="h-px w-[46px] bg-[#b5b4b7]" /></div>
      <Svg s="ml-[4px] h-[8px] w-[8px]" vb="0 0 8 8"><path d="M0 4h8M4 0v8" strokeWidth="1.400" /></Svg>
      <T w={17} className="ml-[12px]">89%</T>
      <Svg s="ml-[11px] h-[10px] w-[10px]" vb="0 0 10 10"><path d="M.5.500h9v9h-9zM5 1v2.500M5 6.500V9M1 5h2.500M6.500 5H9" /></Svg>
    </div>
  );
}

function Taskbar() {
  const cell = "flex h-full w-[32.250px] shrink-0 items-center justify-center";
  return (
    <div className="flex h-[26px] items-center bg-[#1b2126] text-[11px] leading-none text-[#eceff1]">
      <div className="flex w-[31px] justify-center"><FaWindows className="h-[15px] w-[15px] text-white" /></div>
      <div className={cell}><Svg s="h-[14px] w-[14px]" vb="0 0 14 14"><circle cx="8.500" cy="5.500" r="4.800" strokeWidth="1.200" /><path d="M5 9 .5 13.500" strokeWidth="1.300" /></Svg></div>
      <div className={cell}><Svg s="h-[14px] w-[16px]" vb="0 0 16 14"><path d="M1 0v2.500h9V0M1 4.500h9v5H1zM1 14v-2.500h9V14M13.500 0v3M13.500 5v9" strokeWidth="1.100" /></Svg></div>
      <div className={cell}>
        <span className="flex h-full w-[25px] items-center justify-center border-b-2 border-[#7aa9dc]">
          <Svg s="h-[12px] w-[13px]" vb="0 0 13 12"><path d="M0 1h5l1 1h7v9.500H0z" fill="#f4c04e" stroke="none" /><path d="M0 4h13v3H0z" fill="#fadb86" stroke="none" /><path d="M3 12V8h7v4z" fill="#4694cf" stroke="none" /></Svg>
        </span>
      </div>
      <div className={cell}><Svg s="h-[14px] w-[14px]" vb="0 0 14 14"><path d="M0 4h14v10H0z" fill="#f4f4f4" stroke="none" /><path d="M4 4V1h6v3" stroke="#f4f4f4" strokeWidth="1.200" /><path d="M4 6h2.700v2.700H4z" fill="#e4492c" stroke="none" /><path d="M7.300 6H10v2.700H7.300z" fill="#77b52b" stroke="none" /><path d="M4 9.300h2.700V12H4z" fill="#2f9ae0" stroke="none" /><path d="M7.300 9.300H10V12H7.300z" fill="#f4b71c" stroke="none" /></Svg></div>
      <div className={cell}><FaInternetExplorer className="h-[14px] w-[14px] text-[#5fc4ee]" /></div>
      <div className={cell}><span className="flex h-[13px] w-[13px] items-center justify-center rounded-[2px] bg-[#ec7b1c]"><Svg s="h-[9px] w-[7px] text-[#ffe9cf]" vb="0 0 7 9"><path d="M.5.500h6v8h-6zM2 3h3M2 6h3" strokeWidth="1.200" /></Svg></span></div>
      <div className={cell}><Svg s="h-[13px] w-[14px]" vb="0 0 14 13"><path d="M1 6c2-5 7-6 11-5l1 4-7 4z" fill="#eef0f2" stroke="none" /><path d="M1 6l5 3 6-4" stroke="#cc3d3d" strokeWidth="1.400" /><path d="M6 9l7-2v3l-4 3z" fill="#34699f" stroke="none" /></Svg></div>
      <div className={cell}><span className="flex h-[14px] w-[14px] items-center justify-center rounded-[2px] bg-[#b80d0d] text-[10px] font-bold italic text-white">Fz</span></div>
      <div className={cell}><Svg s="h-[12px] w-[14px]" vb="0 0 14 12"><path d="M7 2h7v8H7z" fill="#e7eff8" stroke="none" /><path d="M0 1l8-1v12l-8-1z" fill="#0b6cc4" stroke="none" /><circle cx="4" cy="6" r="2" stroke="#fff" strokeWidth="1.300" /><path d="M8 4l2.500 2.500L14 4" stroke="#0b6cc4" /></Svg></div>
      <div className={cell}><Svg s="h-[14px] w-[15px]" vb="0 0 15 14"><path d="M0 6.500h15M7.500 0v14" stroke="#e3a81b" strokeWidth="1.500" /><circle cx="7.500" cy="6.500" r="3.200" fill="#f5c52b" stroke="none" /></Svg></div>
      <div className={cell}><Svg s="h-[14px] w-[15px]" vb="0 0 15 14"><path d="M1 6l13-1v6c-3 4-10 4-13 0z" fill="#c7343b" stroke="none" /><path d="M4 9c3 2 5 2 8 0" stroke="#3e8fd3" strokeWidth="2" /><circle cx="4" cy="3.500" r="2.300" fill="#df3c3c" stroke="none" /><circle cx="8" cy="3" r="2.300" fill="#f3c325" stroke="none" /><circle cx="10.500" cy="5.500" r="2.300" fill="#3b9f48" stroke="none" /></Svg></div>
      <div className={cell}><Svg s="h-[10px] w-[13px]" vb="0 0 13 10"><path d="M0 2l3 1 3-2 3 2 4-1-2 3 1 3-4 2H5L1 8l1-3z" fill="#8cb928" stroke="none" /><path d="M3 5c2 2 5 2 7 0" stroke="#3f6b14" /></Svg></div>
      <div className={cell}><Svg s="h-[14px] w-[14px]" vb="0 0 14 14"><rect width="14" height="14" rx="4" fill="#2aa9ea" stroke="none" /><path d="M10 4.500C8 2 4 3 4.300 5.200c.3 2 5.200 1.500 5.400 3.600C10 11.300 5.500 11.500 4 9.200" stroke="#fff" strokeWidth="1.800" /></Svg></div>
      <div className={cell}><span className="flex h-[14px] w-[14px] overflow-hidden rounded-full bg-[#11518a]"><FaEdge className="h-[14px] w-[14px] text-[#2bb0d5]" /></span></div>
      <div className={cell}><Svg s="h-[13px] w-[15px]" vb="0 0 15 13"><path d="M3 1h12v9H3z" fill="#55a9e4" stroke="none" /><circle cx="3" cy="7" r="2.500" fill="#9cc9ea" stroke="none" /><path d="M4 9l4 4" stroke="#b8c9d6" strokeWidth="1.500" /></Svg></div>
      <div className={cell}>
        <span className="flex h-full w-[24px] items-center justify-center border-b-2 border-[#7aa9dc]">
          <Svg s="h-[14px] w-[14px]" vb="0 0 14 14"><circle cx="7" cy="7" r="7" fill="#e2402f" stroke="none" /><path d="M7 7 1 3.500A7 7 0 0 0 6.500 14z" fill="#30a24c" stroke="none" /><path d="M7 7h7a7 7 0 0 1-7.500 7z" fill="#f9c81c" stroke="none" /><circle cx="7" cy="7" r="3" fill="#4285f4" stroke="#fff" strokeWidth="1.200" /></Svg>
        </span>
      </div>
      <div className={cell}><Svg s="h-[13px] w-[11px]" vb="0 0 11 13"><path d="M6 0C1 2 0 6 2 9l3 4 5-2V8L6 9C4 7 4 3 6 0z" fill="#cfdbe6" stroke="none" /></Svg></div>
      <div className={`${cell} border-b-2 border-[#7aa9dc] bg-[#474c50]`}><span className="flex h-[12px] w-[15px]"><span className="flex h-full w-[8px] items-center justify-center bg-[#cc4323] text-[9px] font-bold text-white">P</span><span className="flex h-full w-[7px] items-center justify-center border border-[#cc4323] bg-[#f6d5cb] text-[9px] font-bold text-[#cc4323]">3</span></span></div>
      <Svg s="ml-auto h-[7px] w-[11px]" vb="0 0 11 7"><path d="M.5 6.500l5-5 5 5" strokeWidth="1.200" /></Svg>
      <Svg s="ml-[9px] h-[9px] w-[14px]" vb="0 0 14 9"><path d="M3 2.500h10v6H3z" fill="currentColor" /><path d="M0 1h5M1 3h2M3 0v4" strokeWidth="1.200" /></Svg>
      <Svg s="ml-[7px] h-[12px] w-[15px]" vb="0 0 15 12"><path d="M.5 4H3l3-3v10L3 8H.5zM8 4v4M10 2.500v7M12.500 1c2.500 3 2.500 7 0 10" /></Svg>
      <Svg s="ml-[7px] h-[12px] w-[14px]" vb="0 0 14 12"><path d="M1 8c-2-3 1-5 3-4 2-5 8-3 7 1v4H3z" fill="#1274d0" stroke="none" /><circle cx="10.500" cy="8" r="3.500" fill="#d5343a" stroke="none" /><path d="M9 6.500l3 3M12 6.500l-3 3" stroke="#fff" /></Svg>
      <T w={19} className="mb-px ml-[9px]">TUR</T>
      <T w={24} className="mb-px ml-[12px]">16:11</T>
      <Svg s="ml-[16px] h-[14px] w-[15px]" vb="0 0 15 14"><path d="M0 0h14v10H7l-3 3v-3H0z" fill="currentColor" stroke="none" /><path d="M2.500 3h9M2.500 5.500h9M2.500 8h5" stroke="#1b2126" /><circle cx="11" cy="10" r="3" fill="#1b2126" stroke="#eceff1" /></Svg>
      <span className="ml-[17px] mr-[3px] h-full w-px bg-[#5b646b]" />
    </div>
  );
}

function PowerPoint() {
  return (
    <div className="relative ml-[289px] h-[755px] w-[1343px] overflow-hidden bg-white">
      <PptHeader />
      <Ribbon />
      <Workspace />
      <StatusBar />
      <div className="h-px bg-white" />
      <Taskbar />
      <div className="absolute left-[503px] top-[683px] flex h-[37px] w-[337px] items-center rounded-[2px] bg-white text-[12px] leading-none text-[#55575b] shadow-[0_1px_3px_rgba(0,0,0,0.45)]">
        <Svg s="ml-[8px] h-[10px] w-[6px] text-[#c4c6c9]" vb="0 0 6 10"><path d="M1 0v10M5 0v10" strokeWidth="1.500" strokeDasharray="1.500 1" /></Svg>
        <T w={178} className="mb-px ml-[9px]">bbb36.uzep.org is sharing your screen.</T>
        <button className="ml-[9px] flex h-[28px] w-[89px] items-center justify-center rounded-[3px] bg-[#1a73e8] pb-px pr-[2px] font-semibold text-white"><T w={60}>Stop sharing</T></button>
        <T w={22} className="mb-px ml-[8px] text-[#5e8fe6]">Hide</T>
      </div>
    </div>
  );
}

export default function App() {
  return (
    <div className="flex h-[1040px] w-[1920px] flex-col overflow-hidden bg-[#06172a] font-['Open_Sans','Noto_Sans',sans-serif]">
      <TabStrip />
      <Toolbar />
      <Bookmarks />
      <div className="flex h-[34px] shrink-0 items-center justify-center bg-[#0f70d7] pb-px text-[13px] font-bold leading-none text-white">
        <T w={502}>#3 Proje Yönetimi ve Yazılım Geliştirme Metodları - Uzaktan Eğitim Platformu (UZEP)</T>
      </div>
      <div className="flex h-[52px] shrink-0 items-center pl-[22px] pt-[4px] text-white">
        <Svg s="h-[16px] w-[22px]" vb="0 0 22 16">
          <path d="M7 1c5 0 4.500 7 1.800 8.500 4 .5 5 2 5 5H.8c0-3 1-4.500 4.500-5C2.500 8 2 1 7 1z" strokeWidth="1.400" />
          <path d="M17 4l3.500 4L17 12" strokeWidth="1.400" />
        </Svg>
        <span className="ml-[907px] h-[14px] w-px bg-[#4b5868]" />
        <Svg s="ml-[15px] h-[18px] w-[18px]" vb="0 0 18 18"><circle cx="9" cy="9" r="7.800" strokeWidth="1.300" /><circle cx="9" cy="9" r="4" fill="currentColor" stroke="none" /></Svg>
        <Svg s="ml-auto mr-[26px] h-[16px] w-[4px]" vb="0 0 4 16"><circle cx="2" cy="2" r="2" fill="#fff" stroke="none" /><circle cx="2" cy="8" r="2" fill="#fff" stroke="none" /><circle cx="2" cy="14" r="2" fill="#fff" stroke="none" /></Svg>
      </div>
      <div className="ml-[14px] flex h-[22px] w-[111px] shrink-0 items-center rounded-full bg-[#303f9f] pl-[5px] text-[13px] font-semibold leading-none text-white">
        <span className="flex h-[14px] w-[14px] items-center justify-center rounded-full bg-[#00897b]">
          <Svg s="h-[14px] w-[9px]" vb="0 0 9 14"><rect x="2.500" y=".8" width="4" height="7.500" rx="2" strokeWidth="1.200" /><path d="M.6 5.500c0 7 7.800 7 7.800 0M4.500 10.500V13M2.500 13h4" strokeWidth="1.100" /></Svg>
        </span>
        <T w={71} className="mb-[2px] ml-[8px]">Serhat Ciddi</T>
      </div>
      <div className="mt-[10px] flex shrink-0 items-start">
        <PowerPoint />
        <button className="ml-auto flex h-[24px] w-[24px] items-center justify-center bg-[#040f1c] text-white">
          <Svg s="h-[15px] w-[15px]" vb="0 0 15 15">
            <path d="M0 0h5L3.700 1.500l2.600 2.600-1.600 1.600-3-2.500L0 5zM15 0v5l-1.500-1.300-2.600 2.600-1.600-1.600 2.600-2.600L10 0zM0 15v-5l1.500 1.300 2.600-2.600 1.600 1.600-2.600 2.600L5 15zM15 15h-5l1.500-1.500-2.600-2.600 1.600-1.600 2.600 2.600L15 10z" fill="currentColor" stroke="none" />
          </Svg>
        </button>
      </div>
      <div className="flex flex-1 items-start gap-[21px] pl-[913px] pt-[11px]">
        <button className="flex h-[42px] w-[42px] items-center justify-center rounded-full bg-[#0f70d7] text-white shadow-[0_1px_3px_rgba(0,0,0,0.6)]">
          <Svg s="h-[17px] w-[19px]" vb="0 0 19 17"><path d="M3 9C2 3 5 1 9.500 1S17 3 16 9" strokeWidth="1.500" /><path d="M5.500 8.500v7c-6 .5-6-7 0-7zM13.500 8.500v7c6 .5 6-7 0-7z" strokeWidth="1.500" /></Svg>
        </button>
        <button className="flex h-[42px] w-[42px] items-center justify-center rounded-full border-[3px] border-[#a5aab3] text-[#a5aab3]">
          <Svg s="h-[17px] w-[20px]" vb="0 0 20 17"><path d="M1 3h12v11H1zM13 8.500l5-4v8zM2 16 17 1" strokeWidth="1.500" /></Svg>
        </button>
      </div>
    </div>
  );
}
